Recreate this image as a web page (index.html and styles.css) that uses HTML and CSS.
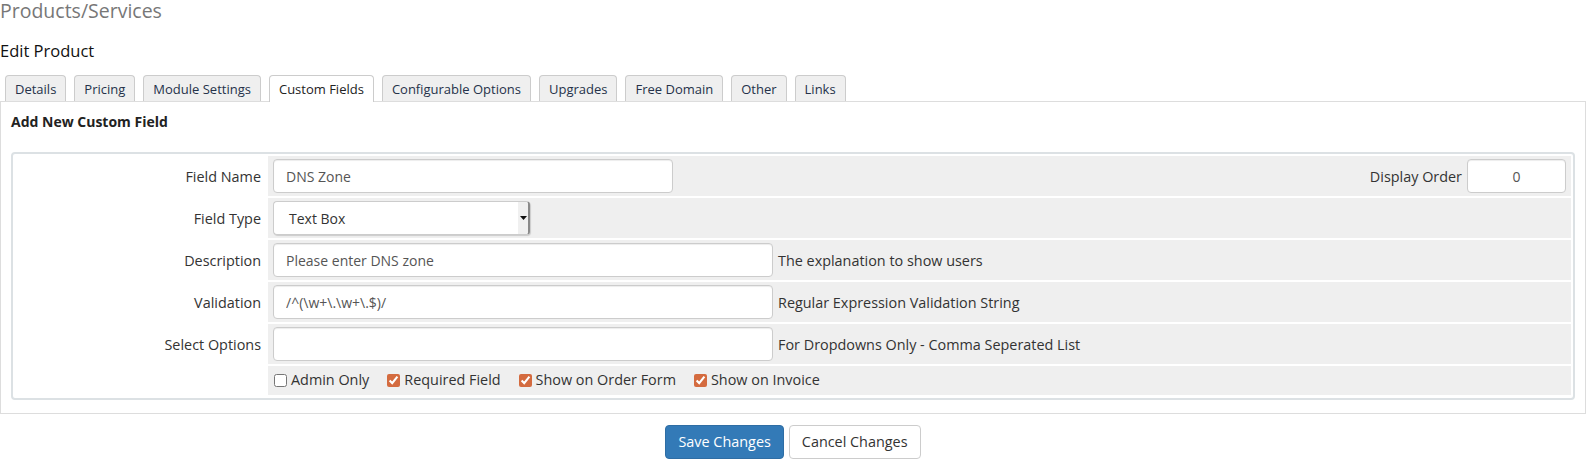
FILE: index.html
```html
<!DOCTYPE html>
<html lang="en">
<head>
<meta charset="utf-8">
<title>Edit Product</title>
<link rel="stylesheet" href="styles.css">
</head>
<body>
<h1 class="page-title">Products/Services</h1>
<h2 class="sub-title">Edit Product</h2>
<ul class="tabs">
  <li class="tab">Details</li>
  <li class="tab">Pricing</li>
  <li class="tab">Module Settings</li>
  <li class="tab active">Custom Fields</li>
  <li class="tab">Configurable Options</li>
  <li class="tab">Upgrades</li>
  <li class="tab">Free Domain</li>
  <li class="tab">Other</li>
  <li class="tab">Links</li>
</ul>
<div class="panel">
  <h3 class="panel-heading">Add New Custom Field</h3>
  <div class="form-frame">
    <div class="form-grid">
      <div class="label">Field Name</div>
      <div class="field split">
        <input class="input w400" type="text" value="DNS Zone">
        <span class="order">Display Order <input class="input w100 centered" type="text" value="0"></span>
      </div>

      <div class="label">Field Type</div>
      <div class="field">
        <div class="select">
          <span class="select-text">Text Box</span>
          <span class="select-arrow"><svg width="7" height="4" viewBox="0 0 7 4"><path d="M0 0h7L3.5 4z" fill="#111"/></svg></span>
        </div>
      </div>

      <div class="label">Description</div>
      <div class="field"><input class="input w500" type="text" value="Please enter DNS zone"><span class="help">The explanation to show users</span></div>

      <div class="label">Validation</div>
      <div class="field"><input class="input w500" type="text" value="/^(\w+\.\w+\.$)/"><span class="help">Regular Expression Validation String</span></div>

      <div class="label">Select Options</div>
      <div class="field"><input class="input w500" type="text" value=""><span class="help">For Dropdowns Only - Comma Seperated List</span></div>

      <div class="label"></div>
      <div class="field checks">
        <label class="check"><input type="checkbox">Admin Only</label>
        <label class="check"><input type="checkbox" checked>Required Field</label>
        <label class="check"><input type="checkbox" checked>Show on Order Form</label>
        <label class="check"><input type="checkbox" checked>Show on Invoice</label>
      </div>
    </div>
  </div>
</div>
<div class="actions">
  <button class="btn btn-primary" type="button">Save Changes</button>
  <button class="btn btn-default" type="button">Cancel Changes</button>
</div>
</body>
</html>
```

FILE: styles.css
```css
* { box-sizing: border-box; }

html, body {
  margin: 0;
  padding: 0;
  background: #fff;
}

body {
  font-family: "Open Sans", "Liberation Sans", sans-serif;
  font-size: 14.4px;
  color: #333;
  width: 1586px;
}

.page-title {
  margin: 0;
  font-size: 19.5px;
  line-height: 22px;
  font-weight: 400;
  color: #777;
}

.sub-title {
  margin: 18px 0 0;
  font-size: 16.5px;
  line-height: 22px;
  font-weight: 400;
  color: #111;
}

.tabs {
  list-style: none;
  margin: 13px 0 0;
  padding: 0 0 0 5px;
  display: flex;
  gap: 8px;
}

.tab {
  font-size: 13px;
  line-height: 18px;
  padding: 4px 9px 3px;
  border: 1px solid #ccc;
  border-bottom: 0;
  border-radius: 4px 4px 0 0;
  background: #efefef;
  color: #25324a;
}

.tab.active {
  background: #fff;
  position: relative;
  margin-bottom: -1px;
  padding-bottom: 4px;
  color: #222;
}

.panel {
  border: 1px solid #ddd;
  padding: 10px 10px 13px;
}

.panel-heading {
  margin: 0 0 21px;
  font-size: 14px;
  line-height: 19px;
  font-weight: 700;
  color: #222;
}

.form-frame {
  border: 2px solid #dce1e4;
  border-radius: 4px;
  padding: 2px 2px 3px;
  background: #fff;
}

.form-grid {
  display: grid;
  grid-template-columns: 251px 1fr;
  gap: 2px;
}

.label {
  display: flex;
  align-items: center;
  justify-content: flex-end;
  padding: 0 5px;
  background: #fff;
  color: #333;
}

.field {
  background: #efefef;
  padding: 3px 5px;
  display: flex;
  align-items: center;
}

.field.split {
  justify-content: space-between;
}

.order {
  display: flex;
  align-items: center;
}

.input {
  height: 34px;
  border: 1px solid #ccc;
  border-radius: 4px;
  padding: 6px 12px;
  font-family: inherit;
  font-size: 14px;
  color: #555;
  background: #fff;
  box-shadow: inset 0 1px 1px rgba(0,0,0,.075);
  outline: none;
}

.w400 { width: 400px; }
.w500 { width: 500px; }
.w100 { width: 99px; margin-left: 5px; }
.centered { text-align: center; }

.help {
  color: #333;
  margin-left: 5px;
}

.select {
  width: 257px;
  height: 34px;
  border: 1px solid #ccc;
  border-right: 2px solid #8a8a8a;
  border-radius: 4px;
  background: #fff;
  display: flex;
  align-items: stretch;
  box-shadow: 1px 1px 1px rgba(0,0,0,.15);
}

.select-text {
  flex: 1;
  padding-left: 15px;
  display: flex;
  align-items: center;
  color: #333;
  font-size: 14px;
}

.select-arrow {
  width: 10px;
  background: #f0f0f0;
  display: flex;
  align-items: center;
  justify-content: center;
  border-radius: 0 2px 2px 0;
}

.checks {
  padding: 4px 5px 5px 6px;
  gap: 18px;
  line-height: 20px;
}

.check {
  display: flex;
  align-items: center;
  color: #333;
}

.check input {
  width: 13px;
  height: 13px;
  margin: 0 4px 0 0;
  accent-color: #d46b3f;
}

.actions {
  display: flex;
  justify-content: center;
  gap: 5px;
  margin-top: 11px;
}

.btn {
  font-family: inherit;
  font-size: 14.4px;
  line-height: 20px;
  padding: 6px 12px;
  border: 1px solid transparent;
  border-radius: 4px;
}

.btn-primary {
  background: #337ab7;
  border-color: #2e6da4;
  color: #fff;
}

.btn-default {
  background: #fff;
  border-color: #ccc;
  color: #333;
}
```
